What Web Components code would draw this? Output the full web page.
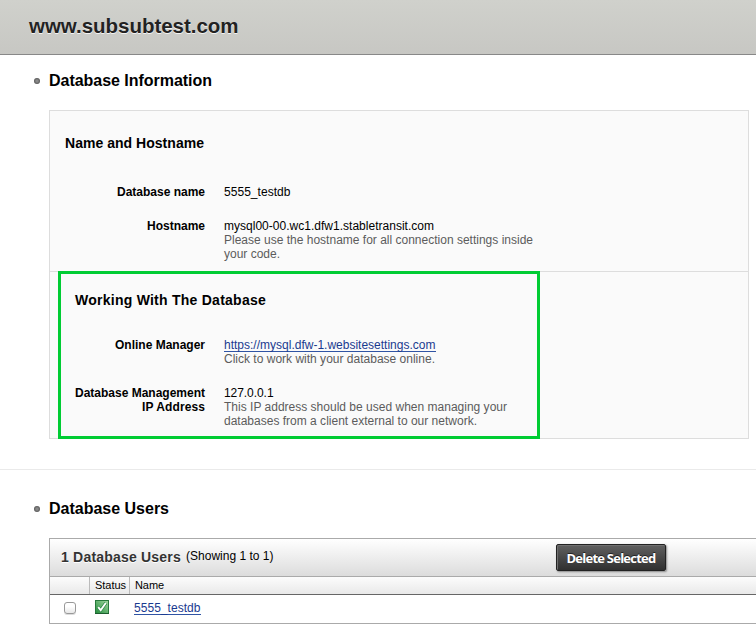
<!DOCTYPE html>
<html lang="en"><head><meta charset="utf-8"><title>www.subsubtest.com</title>
<style>
html{overflow:hidden;background:#fff}
body{margin:0;width:756px;height:628px;overflow:hidden;font:12px/14px "Liberation Sans",Arial,sans-serif;color:#000}
</style></head><body>
<script>
const define=(name,html,setup)=>{
  const t=document.createElement('template');t.innerHTML=html;
  customElements.define(name,class extends HTMLElement{
    constructor(){super();this.attachShadow({mode:'open'}).append(t.content.cloneNode(true));}
    connectedCallback(){if(setup)setup(this);}
  });
};
// One line of text, letter-spaced to the width in its w attribute.
define('text-line',`<style>:host{display:block;white-space:nowrap;width:max-content}span{display:inline-block}</style><span><slot></slot></span>`,el=>{
  const s=el.shadowRoot.querySelector('span'),w=+el.getAttribute('w');
  if(w)s.style.letterSpacing=((w-s.getBoundingClientRect().width)/el.textContent.length)+'px';
});
define('page-title',`<style>:host{display:block;box-sizing:border-box;height:55px;padding-left:29px;border-bottom:1px solid #888;background:linear-gradient(#d0d1cc,#c7c7c3);font-size:20.5px;font-weight:bold;line-height:52px;color:#222;text-shadow:0 1px 0 #f4f4f2}</style><slot></slot>`);
define('section-heading',`<style>:host{display:block}div{display:flex;align-items:center;height:20px;padding-left:34px;gap:9px;font-size:16px;font-weight:bold;line-height:20px}i{width:6px;height:6px;border-radius:50%;background:radial-gradient(#888 25%,#444 85%)}</style><div><i></i><slot></slot></div>`);
define('info-card',`<style>:host{display:block;box-sizing:border-box;width:700px;height:329px;margin-left:49px;border:1px solid #ddd;background:#fafafa}</style><slot></slot>`);
define('info-group',`<style>:host{display:block;box-sizing:border-box;height:160px;padding-top:22px}
:host([marked]){height:168px;width:482px;margin-left:8px;padding-top:16px;border:3px solid #0c3}
:host([marked]) header{padding-left:14px;margin-bottom:28px}:host([marked]) main{margin-left:-11px}
header{height:20px;line-height:20px;font-size:14px;font-weight:bold;padding-left:15px;margin-bottom:32px}main{display:grid;gap:20px}</style><header><slot name="title"></slot></header><main><slot></slot></main>`);
define('info-divider',`<style>:host{display:block;height:1px;margin-bottom:-1px;background:#ddd}</style>`);
define('info-row',`<style>:host{display:grid;grid-template-columns:155px 1fr;column-gap:19px}.l{display:grid;justify-items:end;align-content:start;font-weight:bold}</style><div class="l"><slot name="label"></slot></div><div><slot></slot></div>`);
define('help-text',`<style>:host{display:block;color:#5c5c5c}</style><slot></slot>`);
define('text-link',`<style>:host{display:block;width:max-content;color:#1a3a90;box-shadow:inset 0 -1px #3054a4}</style><slot></slot>`);
define('dark-button',`<style>:host{display:grid;place-items:center;box-sizing:border-box;width:110px;height:27px;border:1px solid #222;border-radius:2px;background:linear-gradient(#606060,#303030);box-shadow:inset 1px 1px 0 #707070,1px 1px 2px #888;color:#fff;font:700 13px/20px "Open Sans",sans-serif;text-shadow:0 -1px 0 #222}</style><slot></slot>`);
define('check-box',`<style>:host{display:block;box-sizing:border-box;width:12px;height:12px;border:1px solid #999;border-radius:3px;background:linear-gradient(#fff 35%,#e8e8e8);box-shadow:0 1px 0 #ddd}</style>`);
define('status-icon',`<style>:host,svg{display:block}</style><svg width="14" height="14" viewBox="0 0 14 14"><defs><linearGradient id="g" x1="1" y1="0" x2="0" y2="1"><stop stop-color="#a3d7a0"/><stop offset="1" stop-color="#228c3c"/></linearGradient></defs><rect x=".5" y=".5" width="13" height="13" fill="url(#g)" stroke="#26793b"/><path d="M0 13.5H14" stroke="#1b5d2d"/><path d="M3.2 7.2L5.7 10.2L10.8 3" fill="none" stroke="#2c8545" stroke-width="3.2"/><path d="M3.2 7.2L5.7 10.2L10.8 3" fill="none" stroke="#fff" stroke-width="1.9"/></svg>`);
define('users-table',`<style>:host{display:block;box-sizing:border-box;margin-left:49px;height:86px;border:1px solid #aaa;border-right:0}
.bar{display:flex;align-items:center;box-sizing:border-box;height:38px;border-bottom:1px solid #aaa;background:linear-gradient(#fff,#dcdcdc);padding-left:11px}
.n{font-size:14px;font-weight:bold;color:#333;text-shadow:0 1px 0 #fff;margin-bottom:2px}.s{margin:0 0 4px 5px;flex:0 0 370px}
.row{display:grid;grid-template-columns:39px 40px 1fr;align-items:center;box-sizing:border-box}
.h{height:18px;border-bottom:1px solid #666;background:linear-gradient(#fcfcfc,#e9e9e9);font-size:11px}.h>*{box-sizing:border-box;height:17px;line-height:16px;padding-left:5px}.h>*+*{border-left:1px solid #bbb}.r{height:28px;padding-bottom:2px}.r>*{padding-left:6px}.r>:first-child{padding:0 0 0 14px}.r>:nth-child(2){padding-bottom:2px}.r>:last-child{padding-left:5px}</style>
<div class="bar"><div class="n"><slot name="count"></slot></div><div class="s"><slot name="shown"></slot></div><slot name="action"></slot></div>
<div class="row h"><div></div><div><text-line w="31">Status</text-line></div><div><text-line w="29">Name</text-line></div></div>
<div class="row r"><div><check-box></check-box></div><div><status-icon></status-icon></div><div><slot></slot></div></div>`);
define('database-page',`<style>:host{display:block}.a{padding:16px 0 19px}.b{padding:29px 0 19px;margin-top:30px;border-top:1px solid #eaeaea}</style>
<page-title><text-line w="209.5">www.subsubtest.com</text-line></page-title>
<section-heading class="a"><text-line w="163">Database Information</text-line></section-heading>
<info-card>
<info-group><text-line slot="title" w="139">Name and Hostname</text-line>
<info-row><text-line slot="label" w="88">Database name</text-line><text-line w="66.5">5555_testdb</text-line></info-row>
<info-row><text-line slot="label" w="58">Hostname</text-line><text-line w="210">mysql00-00.wc1.dfw1.stabletransit.com</text-line><help-text><text-line w="309">Please use the hostname for all connection settings inside</text-line><text-line w="56">your code.</text-line></help-text></info-row></info-group>
<info-divider></info-divider>
<info-group marked><text-line slot="title" w="191">Working With The Database</text-line>
<info-row><text-line slot="label" w="90">Online Manager</text-line><text-link><text-line w="211.5">https://mysql.dfw-1.websitesettings.com</text-line></text-link><help-text><text-line w="211">Click to work with your database online.</text-line></help-text></info-row>
<info-row><text-line slot="label" w="130">Database Management</text-line><text-line slot="label" w="63">IP Address</text-line><text-line w="49.5">127.0.0.1</text-line><help-text><text-line w="283">This IP address should be used when managing your</text-line><text-line w="253">databases from a client external to our network.</text-line></help-text></info-row></info-group>
</info-card>
<section-heading class="b"><text-line w="120">Database Users</text-line></section-heading>
<users-table><text-line slot="count" w="120">1 Database Users</text-line><text-line slot="shown" w="87.5">(Showing 1 to 1)</text-line><dark-button slot="action"><text-line w="89">Delete Selected</text-line></dark-button><text-link><text-line w="66.5">5555_testdb</text-line></text-link></users-table>`);
document.body.append(document.createElement('database-page'));
</script>
</body></html>
